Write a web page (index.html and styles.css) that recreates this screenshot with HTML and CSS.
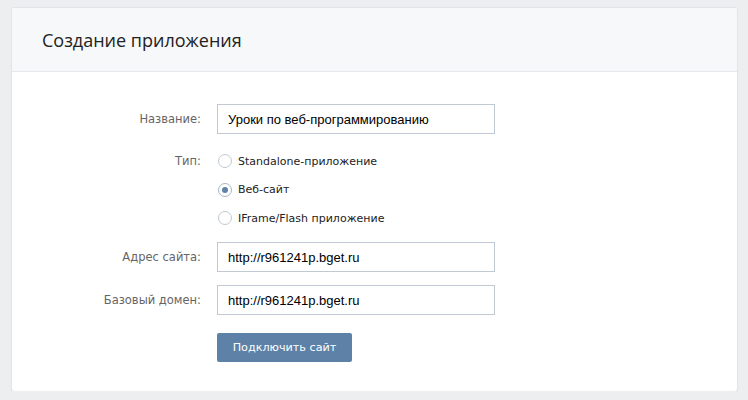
FILE: index.html
```html
<!DOCTYPE html>
<html lang="ru">
<head>
<meta charset="utf-8">
<link rel="stylesheet" href="styles.css">
</head>
<body>
<div class="card">
  <div class="card-header">Создание приложения</div>
  <div class="card-body">
    <div class="row row-name">
      <div class="label">Название:</div>
      <div class="field"><div class="input">Уроки по веб-программированию</div></div>
    </div>
    <div class="row row-radios">
      <div class="label label-radio">Тип:</div>
      <div class="field radios">
        <div class="radio"><span class="dot"></span>Standalone-приложение</div>
        <div class="radio on"><span class="dot"></span>Веб-сайт</div>
        <div class="radio"><span class="dot"></span>IFrame/Flash приложение</div>
      </div>
    </div>
    <div class="row row-addr">
      <div class="label">Адрес сайта:</div>
      <div class="field"><div class="input">http://r961241p.bget.ru</div></div>
    </div>
    <div class="row row-domain">
      <div class="label">Базовый домен:</div>
      <div class="field"><div class="input">http://r961241p.bget.ru</div></div>
    </div>
    <div class="row row-btn">
      <div class="label"></div>
      <div class="field"><button class="btn">Подключить сайт</button></div>
    </div>
  </div>
</div>
</body>
</html>
```

FILE: styles.css
```css
html, body {
  margin: 0;
  padding: 0;
  background: #edeef0;
}
body {
  padding: 8px 11px 0 12px;
  font-family: "DejaVu Sans", sans-serif;
  font-size: 12px;
}
.card {
  background: #fff;
  border-radius: 2px;
  box-shadow: 0 1px 0 0 #d7d8db, 0 0 0 1px #e3e4e8;
  height: 383px;
  box-sizing: border-box;
}
.card-header {
  height: 63px;
  background: #f7f8fa;
  border-bottom: 1px solid #e7e8ec;
  display: flex;
  align-items: center;
  padding-left: 30px;
  font-family: "Open Sans", sans-serif;
  font-size: 18px;
  color: #222;
  border-radius: 2px 2px 0 0;
}
.card-body {
  padding-top: 32px;
  display: flex;
  flex-direction: column;
}
.row {
  display: flex;
  align-items: center;
  gap: 16px;
}
.row-radios {
  align-items: flex-start;
  margin-top: 13px;
}
.row-addr {
  margin-top: 9.5px;
}
.row-domain {
  margin-top: 13px;
}
.row-btn {
  margin-top: 18px;
}
.label {
  width: 189px;
  flex: none;
  text-align: right;
  color: #656565;
  font-size: 11.5px;
}
.label-radio {
  line-height: 28px;
}
.input {
  box-sizing: border-box;
  width: 278px;
  height: 30px;
  border: 1px solid #c0cad5;
  padding: 0 10px;
  display: flex;
  align-items: center;
  font-family: "Liberation Sans", sans-serif;
  font-size: 13px;
  color: #000;
}
.radios {
  display: flex;
  flex-direction: column;
}
.radio {
  height: 28.5px;
  display: flex;
  align-items: center;
  gap: 6px;
  color: #222;
  font-size: 11px;
}
.dot {
  box-sizing: border-box;
  width: 14px;
  height: 14px;
  border: 1px solid #c1c9d1;
  border-radius: 50%;
  margin-left: 1px;
  display: flex;
  align-items: center;
  justify-content: center;
}
.radio.on .dot {
  border-color: #a5b6c8;
}
.radio.on .dot::after {
  content: "";
  width: 6px;
  height: 6px;
  border-radius: 50%;
  background: #5e81a8;
}
.btn {
  width: 135px;
  height: 29px;
  background: #5e81a8;
  border: 0;
  border-radius: 2px;
  color: #fff;
  font-family: "DejaVu Sans", sans-serif;
  font-size: 11.2px;
  padding: 0;
}
```
